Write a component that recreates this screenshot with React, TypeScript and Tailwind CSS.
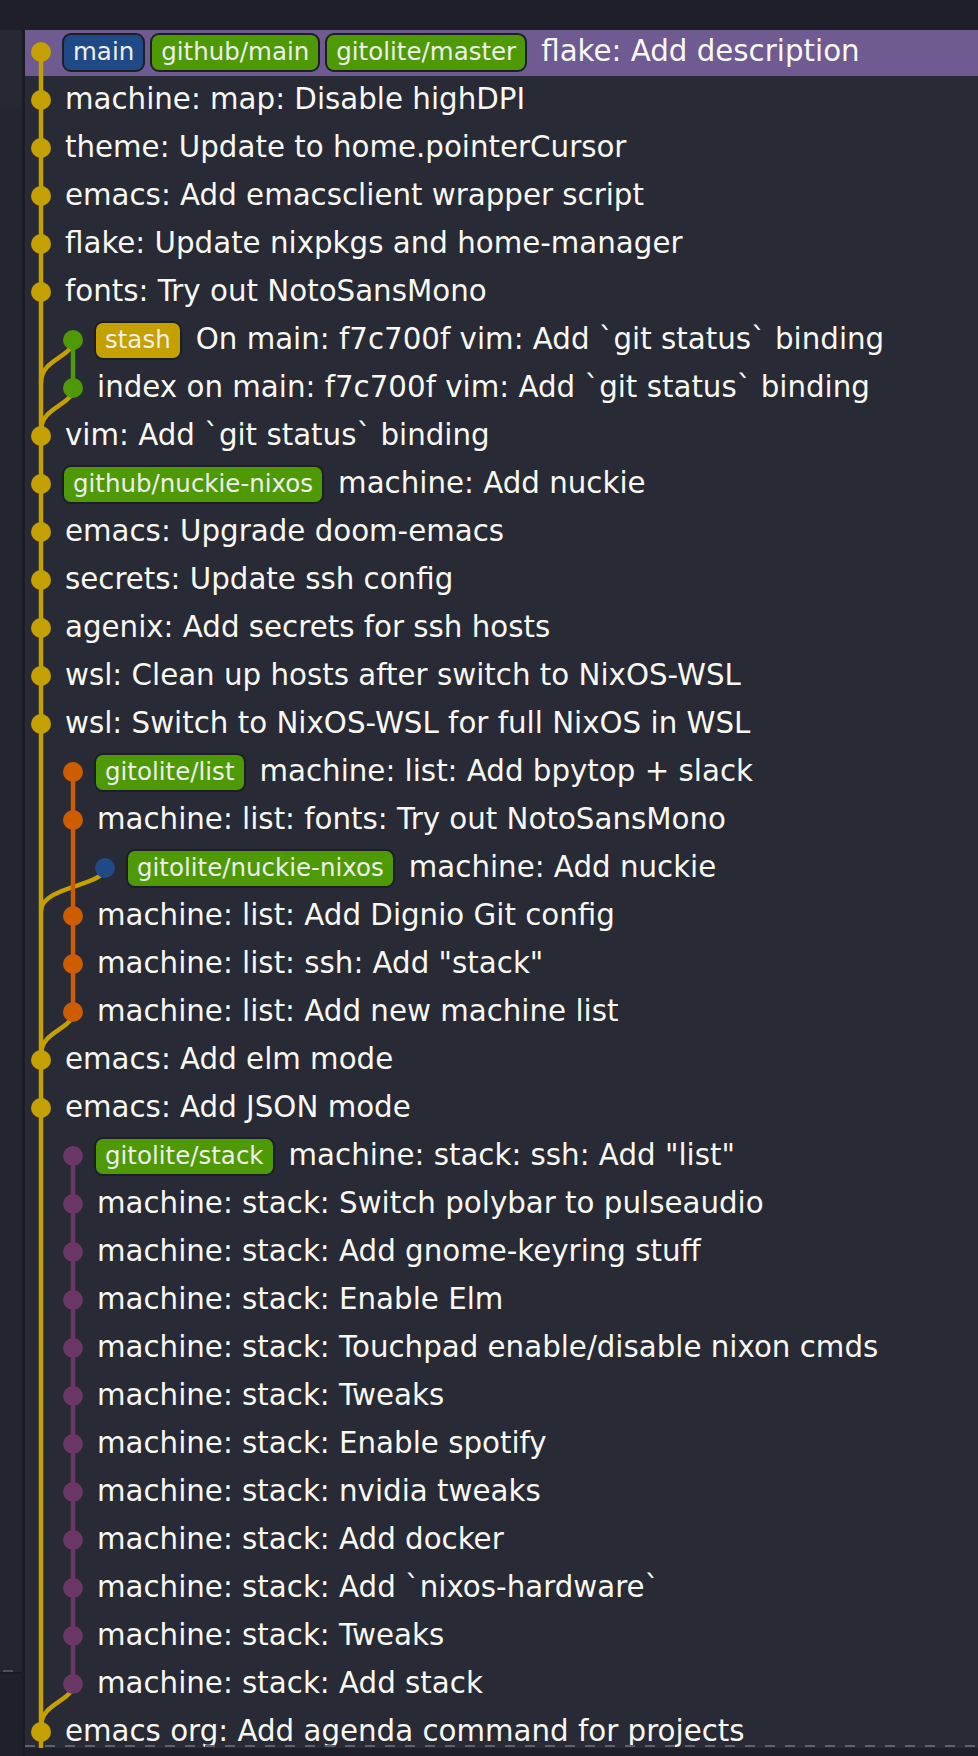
import React from 'react';

// graph palette (tango-ish)
const Y = '#c4a000';
const G = '#4e9a06';
const O = '#ce5c00';
const B = '#204a87';
const P = '#6b3766';

type Tag = { name: string; bg: string };
type Seg = [lane: number, y1: number, y2: number, color: string];
type Row = {
  text: string;
  k: number; // widest lane in the row
  dot: number;
  color: string;
  tags?: Tag[];
  segs: Seg[];
  merge?: number; // lane that curves back into main below the dot
};

const full = (lane: number, c: string): Seg => [lane, 0, 48, c];
const down = (lane: number, c: string): Seg => [lane, 24, 48, c];
const up = (lane: number, c: string): Seg => [lane, 0, 24, c];

const main = (text: string, tags?: Tag[]): Row => ({ text, k: 0, dot: 0, color: Y, tags, segs: [full(0, Y)] });
const onLane = (text: string, c: string, seg: 'top' | 'mid' | 'end', tags?: Tag[]): Row => ({
  text,
  k: 1,
  dot: 1,
  color: c,
  tags,
  segs: [full(0, Y), seg === 'top' ? down(1, c) : seg === 'mid' ? full(1, c) : up(1, c)],
  merge: seg === 'end' ? 1 : undefined,
});

const green = (name: string): Tag => ({ name, bg: 'bg-[#4e9a06]' });

const rows: Row[] = [
  {
    text: 'flake: Add description',
    k: 0,
    dot: 0,
    color: Y,
    tags: [{ name: 'main', bg: 'bg-[#204a87]' }, green('github/main'), green('gitolite/master')],
    segs: [down(0, Y)],
  },
  main('machine: map: Disable highDPI'),
  main('theme: Update to home.pointerCursor'),
  main('emacs: Add emacsclient wrapper script'),
  main('flake: Update nixpkgs and home-manager'),
  main('fonts: Try out NotoSansMono'),
  {
    text: 'On main: f7c700f vim: Add `git status` binding',
    k: 1,
    dot: 1,
    color: G,
    tags: [{ name: 'stash', bg: 'bg-[#c4a000]' }],
    segs: [full(0, Y), down(1, G)],
    merge: 1,
  },
  {
    text: 'index on main: f7c700f vim: Add `git status` binding',
    k: 1,
    dot: 1,
    color: G,
    segs: [full(0, Y), up(1, G)],
    merge: 1,
  },
  main('vim: Add `git status` binding'),
  main('machine: Add nuckie', [green('github/nuckie-nixos')]),
  main('emacs: Upgrade doom-emacs'),
  main('secrets: Update ssh config'),
  main('agenix: Add secrets for ssh hosts'),
  main('wsl: Clean up hosts after switch to NixOS-WSL'),
  main('wsl: Switch to NixOS-WSL for full NixOS in WSL'),
  onLane('machine: list: Add bpytop + slack', O, 'top', [green('gitolite/list')]),
  onLane('machine: list: fonts: Try out NotoSansMono', O, 'mid'),
  {
    text: 'machine: Add nuckie',
    k: 2,
    dot: 2,
    color: B,
    tags: [green('gitolite/nuckie-nixos')],
    segs: [full(0, Y), full(1, O)],
    merge: 2,
  },
  onLane('machine: list: Add Dignio Git config', O, 'mid'),
  onLane('machine: list: ssh: Add "stack"', O, 'mid'),
  onLane('machine: list: Add new machine list', O, 'end'),
  main('emacs: Add elm mode'),
  main('emacs: Add JSON mode'),
  onLane('machine: stack: ssh: Add "list"', P, 'top', [green('gitolite/stack')]),
  onLane('machine: stack: Switch polybar to pulseaudio', P, 'mid'),
  onLane('machine: stack: Add gnome-keyring stuff', P, 'mid'),
  onLane('machine: stack: Enable Elm', P, 'mid'),
  onLane('machine: stack: Touchpad enable/disable nixon cmds', P, 'mid'),
  onLane('machine: stack: Tweaks', P, 'mid'),
  onLane('machine: stack: Enable spotify', P, 'mid'),
  onLane('machine: stack: nvidia tweaks', P, 'mid'),
  onLane('machine: stack: Add docker', P, 'mid'),
  onLane('machine: stack: Add `nixos-hardware`', P, 'mid'),
  onLane('machine: stack: Tweaks', P, 'mid'),
  onLane('machine: stack: Add stack', P, 'end'),
  main('emacs org: Add agenda command for projects'),
];

const laneX = (lane: number) => 16 + 32 * lane;

const GraphRow: React.FC<{ row: Row; first: boolean }> = ({ row, first }) => {
  const w = 37 + 32 * row.k;
  const mx = row.merge !== undefined ? laneX(row.merge) : 0;
  return (
    <div className={`h-[48px] flex items-center whitespace-nowrap ${first ? 'bg-[#6f5a92]' : ''}`}>
      <svg width={w} height={48} className="shrink-0 overflow-visible">
        {/* curve back into the main lane */}
        {row.merge !== undefined && (
          <path d={`M${mx} 24 C${mx} 42 16 42 16 67`} fill="none" stroke={Y} strokeWidth={4.5} />
        )}
        {row.segs.map(([lane, y1, y2, c], j) => (
          <line key={j} x1={laneX(lane)} x2={laneX(lane)} y1={y1} y2={y2} stroke={c} strokeWidth={4.5} />
        ))}
        <circle cx={laneX(row.dot)} cy={24} r={10} fill={row.color} />
      </svg>

      {row.tags && (
        <div className="flex items-center gap-[5px] mr-[14px]">
          {row.tags.map((t) => (
            <span
              key={t.name}
              className={`${t.bg} h-[39px] flex items-center px-[9px] border-2 border-[#1e1f26] rounded-[9px] text-[24.5px] text-[#eeeeec]`}
            >
              {t.name}
            </span>
          ))}
        </div>
      )}

      <span className={`text-[29.3px] text-[#f8f8f2] ${row.tags ? '' : 'ml-[3px]'}`}>{row.text}</span>
    </div>
  );
};

export default function App() {
  return (
    <div className="h-[1756px] w-[978px] flex flex-col bg-[#1e1f28] font-['DejaVu_Sans',sans-serif] overflow-hidden">
      {/* top bar */}
      <div className="h-[30px] shrink-0 bg-[#1e1f29]" />

      <div className="flex flex-1 min-h-0">
        {/* left strip */}
        <aside className="w-[25px] shrink-0 flex flex-col border-r-[3px] border-[#1b1c23]">
          <div className="h-[78px] bg-[#262833]" />
          <div className="h-[1564px] bg-[#24252f] flex flex-col justify-end">
            <div className="h-[2px] w-[10px] ml-[3px] bg-[#4e5060]" />
          </div>
          <div className="flex-1 bg-[#1f2029] border-t-2 border-[#1b1c23]" />
        </aside>

        {/* commit graph */}
        <main className="flex-1 flex flex-col min-w-0">
          <div className="relative h-[1718px] overflow-hidden bg-[#282a36]">
            <div className="-mt-[2px]">
              {rows.map((r, i) => (
                <GraphRow key={i} row={r} first={i === 0} />
              ))}
            </div>
            <div className="absolute bottom-[1px] left-0 right-0 h-[2px] bg-[repeating-linear-gradient(90deg,#5d6070_0_10px,transparent_10px_20px)]" />
          </div>
          <div className="flex-1 bg-[#1e1f28]" />
        </main>
      </div>
    </div>
  );
}
